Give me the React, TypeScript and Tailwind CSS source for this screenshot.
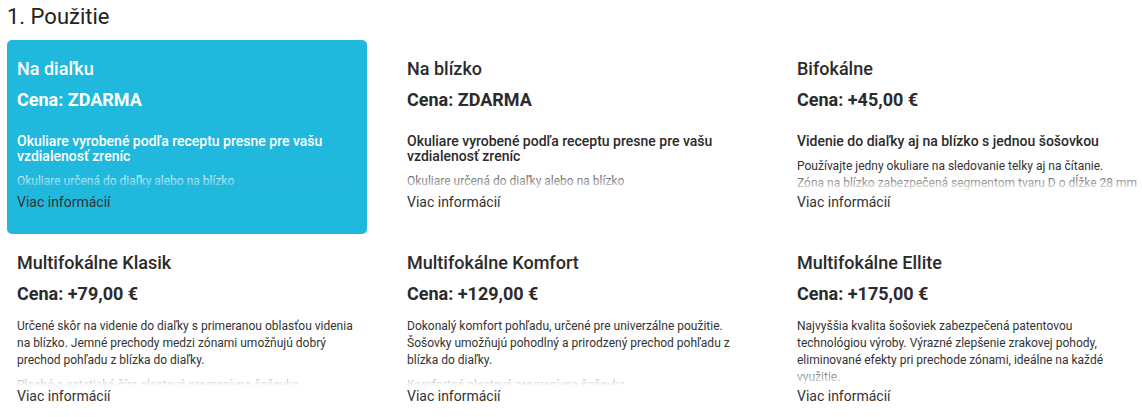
type Option = {
  title: string;
  price: string;
  subtitle?: string;
  paragraphs: string[][];
  selected?: boolean;
};

const OPTIONS: Option[] = [
  {
    title: 'Na diaľku',
    price: 'Cena: ZDARMA',
    subtitle: 'Okuliare vyrobené podľa receptu presne pre vašu vzdialenosť zreníc',
    paragraphs: [['Okuliare určená do diaľky alebo na blízko']],
    selected: true,
  },
  {
    title: 'Na blízko',
    price: 'Cena: ZDARMA',
    subtitle: 'Okuliare vyrobené podľa receptu presne pre vašu vzdialenosť zreníc',
    paragraphs: [['Okuliare určená do diaľky alebo na blízko']],
  },
  {
    title: 'Bifokálne',
    price: 'Cena: +45,00 €',
    subtitle: 'Videnie do diaľky aj na blízko s jednou šošovkou',
    paragraphs: [
      [
        'Používajte jedny okuliare na sledovanie telky aj na čítanie.',
        'Zóna na blízko zabezpečená segmentom tvaru D o dĺžke 28 mm',
      ],
    ],
  },
  {
    title: 'Multifokálne Klasik',
    price: 'Cena: +79,00 €',
    paragraphs: [
      ['Určené skôr na videnie do diaľky s primeranou oblasťou videnia na blízko. Jemné prechody medzi zónami umožňujú dobrý prechod pohľadu z blízka do diaľky.'],
      ['Plochá a estetická číra plastová progresívna šošovka'],
    ],
  },
  {
    title: 'Multifokálne Komfort',
    price: 'Cena: +129,00 €',
    paragraphs: [
      ['Dokonalý komfort pohľadu, určené pre univerzálne použitie. Šošovky umožňujú pohodlný a prirodzený prechod pohľadu z blízka do diaľky.'],
      ['Komfortná plastová progresívna šošovka'],
    ],
  },
  {
    title: 'Multifokálne Ellite',
    price: 'Cena: +175,00 €',
    paragraphs: [
      ['Najvyššia kvalita šošoviek zabezpečená patentovou technológiou výroby. Výrazné zlepšenie zrakovej pohody, eliminované efekty pri prechode zónami, ideálne na každé využitie.'],
      ['Prémiová plastová progresívna šošovka'],
    ],
  },
];

function OptionCard({ opt }: { opt: Option }) {
  const sel = !!opt.selected;
  return (
    <div
      className={
        'h-[194px] flex flex-col px-[10px] pt-[18px] pb-[22px] rounded-[5px] cursor-pointer ' +
        (sel ? 'bg-[#21b8dd] text-white' : 'bg-white text-[#2b2b2b]')
      }
    >
      <div className="text-[18px] leading-[22px] font-medium">{opt.title}</div>
      <div className="mt-[9px] text-[18px] leading-[22px] font-bold">{opt.price}</div>
      <div className="relative mt-[13px] flex-1 min-h-0 overflow-hidden">
        {opt.subtitle && (
          <div className="mt-[10px] text-[14px] leading-[15px] font-medium">{opt.subtitle}</div>
        )}
        {opt.paragraphs.map((p, i) => (
          <p
            key={i}
            className={
              'text-[12px] leading-[17px] ' +
              (opt.subtitle ? 'mt-[9px] ' : i > 0 ? 'mt-[8px] ' : '') +
              (sel ? 'text-white' : 'text-[#333333]')
            }
          >
            {p.map((line, j) => (
              <span key={j}>
                {j > 0 && <br />}
                {line}
              </span>
            ))}
          </p>
        ))}
        <div
          className={
            'absolute left-0 right-0 bottom-0 h-[20px] bg-linear-to-b from-transparent ' +
            (sel ? 'to-[#21b8dd]' : 'to-white')
          }
        />
      </div>
      <div className="text-[14px] leading-[20px] text-[#333333]">Viac informácií</div>
    </div>
  );
}

export default function App() {
  return (
    <div className="w-[1142px] h-[417px] overflow-hidden bg-white font-[Roboto,sans-serif] pl-[7px] pt-[4px]">
      <h2 className="text-[22px] leading-[26px] font-normal text-[#222222] mb-[10px]">1. Použitie</h2>
      <div className="grid grid-cols-[360px_360px_360px] gap-x-[30px]">
        {OPTIONS.map(o => (
          <OptionCard key={o.title} opt={o} />
        ))}
      </div>
    </div>
  );
}
